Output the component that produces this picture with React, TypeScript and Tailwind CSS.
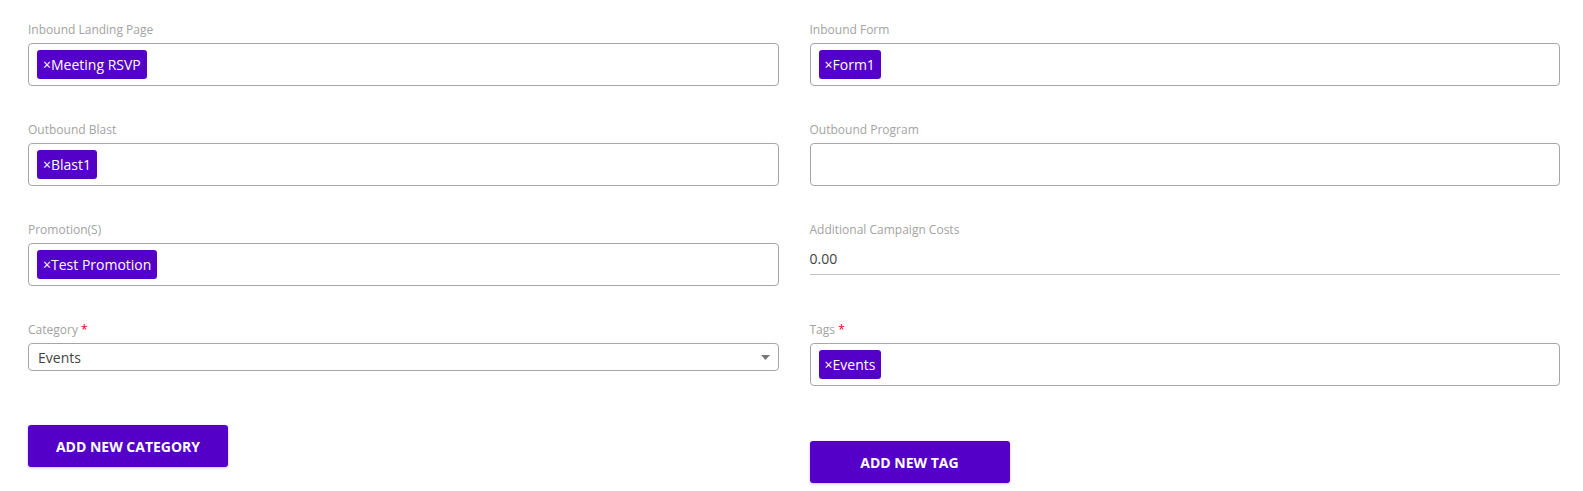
import React from "react";

type Field = {
  label: string;
  required?: boolean;
  chips?: string[];
  kind?: "tags" | "select" | "underline";
  value?: string;
};

const left: Field[] = [
  { label: "Inbound Landing Page", chips: ["Meeting RSVP"] },
  { label: "Outbound Blast", chips: ["Blast1"] },
  { label: "Promotion(S)", chips: ["Test Promotion"] },
];

const right: Field[] = [
  { label: "Inbound Form", chips: ["Form1"] },
  { label: "Outbound Program", chips: [] },
  { label: "Additional Campaign Costs", kind: "underline", value: "0.00" },
];

function Label({ text, required }: { text: string; required?: boolean }) {
  return (
    <div className="text-[12px] leading-[16px] text-[#a3a3a3]">
      {text}
      {required && <span className="text-[#e0001b]"> *</span>}
    </div>
  );
}

function Chip({ text }: { text: string }) {
  return (
    <span className="inline-flex h-[29px] items-center rounded-[3px] bg-[#5500c8] px-[6px] text-[14px] text-white">
      ×{text}
    </span>
  );
}

function TagInput({ chips }: { chips: string[] }) {
  return (
    <div className="mt-[5px] flex h-[43px] items-center gap-1 rounded-[4px] border border-[#a6a6a6] px-[8px]">
      {chips.map((c) => (
        <Chip key={c} text={c} />
      ))}
    </div>
  );
}

function FieldBlock({ f }: { f: Field }) {
  return (
    <div className="h-[100px]">
      <Label text={f.label} required={f.required} />
      {f.kind === "underline" ? (
        <div className="mt-[5px] flex h-[32px] items-center border-b border-[#c4c4c4] text-[14px] text-[#444]">
          {f.value}
        </div>
      ) : (
        <TagInput chips={f.chips ?? []} />
      )}
    </div>
  );
}

function PrimaryButton({ children }: { children: React.ReactNode }) {
  return (
    <button className="flex h-[42px] w-[200px] items-center justify-center rounded-[3px] bg-[#5500c8] text-[14px] font-bold text-white shadow-[0_1px_3px_rgba(120,60,200,0.35)]">
      {children}
    </button>
  );
}

export default function App() {
  return (
    <div
      className="min-h-[491px] bg-white pl-[28px] pr-[23px] pt-[22px]"
      style={{ fontFamily: '"Open Sans", "Noto Sans", sans-serif' }}
    >
      <div className="grid grid-cols-2 gap-x-[31px]">
        <div className="flex flex-col">
          {left.map((f) => (
            <FieldBlock key={f.label} f={f} />
          ))}
          <div>
            <Label text="Category" required />
            <div className="mt-[5px] flex h-[28px] items-center justify-between rounded-[4px] border border-[#a6a6a6] pl-[9px] pr-[8px] text-[14px] text-[#444]">
              <span>Events</span>
              <svg width="9" height="5" viewBox="0 0 9 5">
                <path d="M0 0h9L4.5 5z" fill="#777" />
              </svg>
            </div>
          </div>
          <div className="mt-[54px]">
            <PrimaryButton>ADD NEW CATEGORY</PrimaryButton>
          </div>
        </div>
        <div className="flex flex-col">
          {right.map((f) => (
            <FieldBlock key={f.label} f={f} />
          ))}
          <div>
            <Label text="Tags" required />
            <TagInput chips={["Events"]} />
          </div>
          <div className="mt-[55px]">
            <PrimaryButton>ADD NEW TAG</PrimaryButton>
          </div>
        </div>
      </div>
    </div>
  );
}
